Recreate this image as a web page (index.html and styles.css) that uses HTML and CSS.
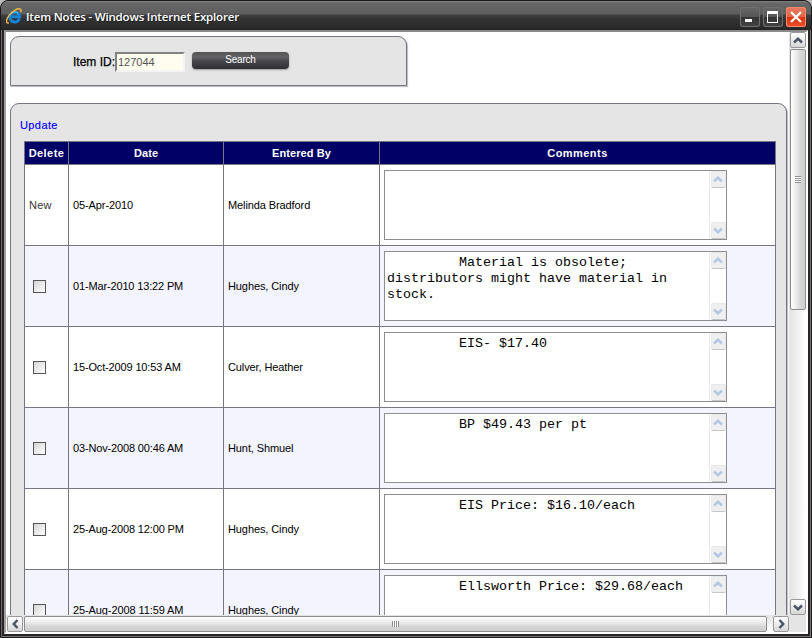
FILE: index.html
```
<!DOCTYPE html>
<html lang="en">
<head>
<meta charset="utf-8">
<title>Item Notes</title>
<link rel="stylesheet" href="styles.css">
</head>
<body>
<svg class="defs" width="0" height="0">
  <symbol id="up" viewBox="0 0 10 7"><path d="M1 5.5 5 1.8 9 5.5" fill="none" stroke="currentColor" stroke-width="2.5"/></symbol>
  <symbol id="down" viewBox="0 0 10 7"><path d="M1 1.5 5 5.2 9 1.5" fill="none" stroke="currentColor" stroke-width="2.5"/></symbol>
  <symbol id="left" viewBox="0 0 7 10"><path d="M5.5 1 1.8 5 5.5 9" fill="none" stroke="currentColor" stroke-width="2.5"/></symbol>
  <symbol id="right" viewBox="0 0 7 10"><path d="M1.5 1 5.2 5 1.5 9" fill="none" stroke="currentColor" stroke-width="2.5"/></symbol>
</svg>
<div class="window">
  <header class="titlebar">
    <svg class="logo" width="16" height="16" viewBox="0 0 16 16">
      <path d="M13.4 10.6A4.9 4.9 0 1 1 13.6 8.8H5.6" fill="none" stroke="#1683d4" stroke-width="3"/>
      <path d="M4.2 6.2A4.8 4.8 0 0 1 12 5.4" fill="none" stroke="#65c7f7" stroke-width="1.2"/>
      <path d="M2.8 14.8C-.6 15.8 0 11.6 3 7.6 6.4 3 12-.4 14.4 1.2c.9.7.7 1.9.2 3" fill="none" stroke="#f0b640" stroke-width="1.5"/>
    </svg>
    <h1 class="title">Item Notes - Windows Internet Explorer</h1>
    <div class="controls">
      <span class="ctl"><svg width="20" height="20"><path d="M5 12h7v3H5z" fill="#fff"/></svg></span>
      <span class="ctl"><svg width="20" height="20"><path d="M4 4h11v12H4zM5 7v8h9V7z" fill="#fff" fill-rule="evenodd"/></svg></span>
      <span class="ctl close"><svg width="20" height="20"><path d="M5 5l10 10M15 5L5 15" stroke="#fff" stroke-width="2.3"/></svg></span>
    </div>
  </header>
  <div class="frame">
    <main class="page">
      <section class="panel search">
        <label class="label">Item ID:</label><span class="field">127044</span><span class="button">Search</span>
      </section>
      <section class="panel notes">
        <a class="update">Update</a>
        <div class="table">
          <div class="row head"><div class="wide">Delete</div><div>Date</div><div>Entered By</div><div class="wide">Comments</div></div>
          <div class="row">
            <div class="new">New</div><div>05-Apr-2010</div><div>Melinda Bradford</div>
            <div><div class="area"><pre></pre><span class="mini"><i><svg><use href="#up"/></svg></i><i><svg><use href="#down"/></svg></i></span></div></div>
          </div>
          <div class="row alt">
            <div><span class="check"></span></div><div class="stamp">01-Mar-2010 13:22 PM</div><div>Hughes, Cindy</div>
            <div><div class="area"><pre>         Material is obsolete;
distributors might have material in
stock.</pre><span class="mini"><i><svg><use href="#up"/></svg></i><i><svg><use href="#down"/></svg></i></span></div></div>
          </div>
          <div class="row">
            <div><span class="check"></span></div><div class="stamp">15-Oct-2009 10:53 AM</div><div>Culver, Heather</div>
            <div><div class="area"><pre>         EIS- $17.40</pre><span class="mini"><i><svg><use href="#up"/></svg></i><i><svg><use href="#down"/></svg></i></span></div></div>
          </div>
          <div class="row alt">
            <div><span class="check"></span></div><div class="stamp">03-Nov-2008 00:46 AM</div><div>Hunt, Shmuel</div>
            <div><div class="area"><pre>         BP $49.43 per pt</pre><span class="mini"><i><svg><use href="#up"/></svg></i><i><svg><use href="#down"/></svg></i></span></div></div>
          </div>
          <div class="row">
            <div><span class="check"></span></div><div class="stamp">25-Aug-2008 12:00 PM</div><div>Hughes, Cindy</div>
            <div><div class="area"><pre>         EIS Price: $16.10/each</pre><span class="mini"><i><svg><use href="#up"/></svg></i><i><svg><use href="#down"/></svg></i></span></div></div>
          </div>
          <div class="row alt">
            <div><span class="check"></span></div><div>25-Aug-2008 11:59 AM</div><div>Hughes, Cindy</div>
            <div><div class="area"><pre>         Ellsworth Price: $29.68/each</pre><span class="mini"><i><svg><use href="#up"/></svg></i><i><svg><use href="#down"/></svg></i></span></div></div>
          </div>
        </div>
      </section>
    </main>
    <div class="vbar">
      <span class="arrow"><svg width="10" height="7"><use href="#up"/></svg></span>
      <span class="vthumb"><b></b></span>
      <span class="arrow end"><svg width="10" height="7"><use href="#down"/></svg></span>
    </div>
    <div class="hbar">
      <span class="arrow"><svg width="7" height="10"><use href="#left"/></svg></span>
      <span class="hthumb"><b></b></span>
      <span class="arrow end"><svg width="7" height="10"><use href="#right"/></svg></span>
    </div>
    <div class="corner"></div>
  </div>
</div>
</body>
</html>
```
FILE: styles.css
```
* { box-sizing: border-box; }
body { margin: 0; background: #b9bcb9; font: 11px "Liberation Sans", sans-serif; color: #000; overflow: hidden; }
.defs { display: block; position: absolute; }
.window {
  width: 812px; height: 638px; display: flex; flex-direction: column;
  border: 1px solid #1c1819; border-radius: 8px 8px 0 0; overflow: hidden;
  background: #292526; padding: 0 3px 3px;
  box-shadow: inset 1px 0 #6d6969, inset -1px -1px #777;
}
.titlebar {
  height: 29px; flex: none; display: flex; align-items: center; margin: 0 -3px; padding: 2px 5px 0 5px;
  background: linear-gradient(#838383 0, #676767 2px, #5d5d5d 13px, #404043 14px, #333 18px, #292929 28px, #1b1b1b 29px);
}
.logo { display: block; margin-top: -1px; }
.title { margin: -1px 0 0 4px; font: 600 11.5px "Open Sans", sans-serif; letter-spacing: -0.18px; color: #fff; white-space: nowrap; text-shadow: 1px 1px #222; }
.controls { display: flex; gap: 3px; margin-left: auto; margin-top: 1px; }
.ctl { width: 20px; height: 20px; border-radius: 3px; box-shadow: inset 0 0 0 1px #707070; background: linear-gradient(#686868, #555 50%, #343436 52%, #444); }
.ctl svg { display: block; }
.close { box-shadow: inset 0 0 0 1px #f08a70; background: linear-gradient(#e57a60, #e36545 50%, #db3411 52%, #ee4e29); }
.frame {
  flex: 1; min-height: 0; display: grid; grid-template-columns: 783px 17px; grid-template-rows: 583px 17px;
  border: solid; border-width: 2px; border-color: #8b8b8b #fff #fff #a0a0a0; background: #fff;
}
.page { overflow: hidden; background: #fff; padding: 4px 0 0 4px; }
.panel { background: #e5e5e5; border: 1px solid #767584; box-shadow: 1px 1px 1px #bbb; }
.search { width: 397px; height: 50px; border-radius: 9px 9px 0 0; display: flex; align-items: flex-start; padding: 15px 0 0 62px; }
.label { font-size: 12px; line-height: 20px; white-space: nowrap; width: 42px; -webkit-text-stroke: 0.25px #000; }
.field { width: 70px; height: 20px; border: 2px solid; border-color: #828282 #f4f4f4 #f4f4f4 #828282; background: #fffdf0; color: #555; padding: 0 0 0 1px; line-height: 16px; }
.button { width: 97px; height: 17px; margin-left: 7px; border-radius: 4px; background: linear-gradient(#555, #626266 30%, #454549 55%, #303034); box-shadow: 0 1px 2px #999; color: #fff; font-size: 10px; letter-spacing: -0.2px; line-height: 16px; text-align: center; }
.notes { width: 777px; height: 900px; margin-top: 17px; border-radius: 9px 9px 0 0; padding: 14px 0 0 9px; }
.update { display: block; color: #00f; line-height: 15px; height: 23px; letter-spacing: 0.4px; -webkit-text-stroke: 0.15px #00f; }
.table { margin-left: 4px; width: 752px; border: solid #767584; border-width: 1px 0 0 1px; }
.row { display: grid; grid-template-columns: 44px 155px 156px 396px; height: 81px; background: #fff; }
.row > div { border: solid #767584; border-width: 0 1px 1px 0; padding-left: 4px; display: flex; align-items: center; white-space: nowrap; letter-spacing: -0.1px; }
.row > .stamp { letter-spacing: -0.15px; }
.row > .new { color: #333; letter-spacing: 0.2px; }
.alt { background: #f4f4ff; }
.head { height: 23px; background: #000066; color: #fff; font-weight: bold; }
.head > div { justify-content: center; padding: 0; letter-spacing: 0.1px; }
.head > .wide { letter-spacing: 0.45px; }
.check { width: 13px; height: 13px; margin-left: 4px; border: 1px solid #555; background: linear-gradient(135deg, #d5d5d5, #fff); }
.area { width: 343px; height: 70px; border: 1px solid #8e8e8e; background: #fff; display: flex; justify-content: space-between; }
.area pre { margin: 3px 0 0 2px; font: 13.33px/16px "Liberation Mono", monospace; letter-spacing: 0; }
.mini { width: 17px; background: #fff; border-left: 1px solid #e8e8e8; display: flex; flex-direction: column; justify-content: space-between; align-items: center; }
.mini i { width: 15px; height: 17px; border-radius: 2px; background: #efefef; border: 1px solid #e8e8e8; border-bottom-color: #c5c5c5; display: flex; align-items: center; justify-content: center; color: #b3c9e3; }
.mini svg { width: 10px; height: 7px; }
.vbar { display: flex; flex-direction: column; padding-left: 1px; background: linear-gradient(90deg, #e2e2e2, #fff); }
.hbar { display: flex; padding: 1px 0 0 1px; background: linear-gradient(#e2e2e2, #fff); }
.arrow { width: 16px; height: 16px; flex: none; border: 1px solid #999; border-radius: 2px; background: linear-gradient(#fff, #eee 45%, #d6d6d6); color: #4c5367; display: flex; align-items: center; justify-content: center; }
.arrow.end { margin-top: auto; }
.hbar .end { margin: 0 0 0 auto; }
.vthumb { height: 261px; margin-top: 1px; border: 1px solid #8e8e8e; border-radius: 2px; background: linear-gradient(90deg, #fff, #f0f0f0 30%, #d5d5d5 70%, #cfcfcf); display: flex; align-items: center; justify-content: center; }
.vthumb b { width: 6px; height: 7px; background: repeating-linear-gradient(#8e8e8e 0 1px, #fff 1px 2px); }
.hthumb { width: 743px; margin-left: 1px; border: 1px solid #8e8e8e; border-radius: 2px; background: linear-gradient(#fff, #f0f0f0 30%, #d5d5d5 70%, #cfcfcf); display: flex; align-items: center; justify-content: center; }
.hthumb b { width: 7px; height: 6px; background: repeating-linear-gradient(90deg, #8e8e8e 0 1px, #fff 1px 2px); }
.corner { background: #e5e5e5; }
```
